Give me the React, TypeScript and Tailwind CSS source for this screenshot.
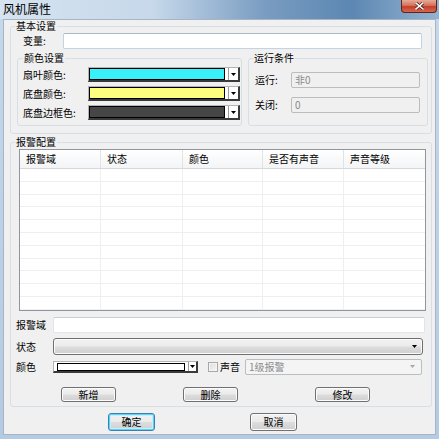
import React from "react";

const Tri = ({ color = "#000" }: { color?: string }) => (
  <svg width="5" height="3" viewBox="0 0 5 3">
    <path d="M0 0H5L2.5 3Z" fill={color} />
  </svg>
);

function ColorCombo({ swatch }: { swatch: string }) {
  return (
    <div className="w-[152px] h-[15px] flex bg-white border-t border-l border-t-[#b4b4b4] border-l-[#b4b4b4] border-b-2 border-r-2 border-b-[#3a3a3a] border-r-[#3a3a3a]">
      <div className={`w-[136px] h-[12px] border border-black ${swatch}`} />
      <div className="ml-[3px] w-px h-[12px] bg-[#9a9a9a]" />
      <div className="flex-1 flex items-center justify-center">
        <Tri />
      </div>
    </div>
  );
}

function Btn({ children, cls }: { children: React.ReactNode; cls: string }) {
  return (
    <div
      className={`${cls} flex items-center justify-center rounded-[3px] border border-[#707070] bg-[linear-gradient(to_bottom,#f2f2f2_0%,#ebebeb_48%,#dddddd_52%,#cfcfcf_100%)] shadow-[inset_0_0_0_1px_#fcfcfc]`}
    >
      {children}
    </div>
  );
}

const rows = Array.from({ length: 11 });

export default function App() {
  return (
    <div className="w-[439px] h-[439px] overflow-hidden font-['Noto_Sans_CJK_SC','Noto_Sans',sans-serif] text-[10px] leading-[12px] text-black bg-[linear-gradient(to_bottom,#c5d8ec,#b3cbe3)] flex flex-col">
      {/* title bar */}
      <div className="h-[19px] flex items-start bg-[linear-gradient(to_right,#d6e3f0_0%,#c6d8ea_35%,#7a9dc2_60%,#5c87b2_80%,#93b3d2_100%)]">
        <span className="ml-[3px] mt-[2px] text-[12px] leading-[13px] text-black">风机属性</span>
        <div className="ml-auto mr-[2px] w-[36px] h-[13px] flex items-center justify-center rounded-b-[4px] border border-t-0 border-[#5e231b] bg-[linear-gradient(to_bottom,#e9a996_0%,#d4735d_45%,#c2402c_55%,#d9664c_100%)]">
          <svg width="9" height="8" viewBox="0 0 9 8">
            <path d="M1 1L8 7M8 1L1 7" stroke="#4a1a14" strokeWidth="3" strokeLinecap="square" />
            <path d="M1 1L8 7M8 1L1 7" stroke="#ffffff" strokeWidth="1.6" strokeLinecap="square" />
          </svg>
        </div>
      </div>

      {/* client area */}
      <div className="ml-[3px] w-[433px] h-[416px] bg-[#f0f0f0] border border-[#a7b4c2] pl-[6px] flex flex-col">
        {/* 基本设置 */}
        <fieldset className="w-[422px] h-[114px] border border-[#d5dfe5] rounded-[3px]">
          <legend className="ml-[4px] px-[1px] leading-[12px]">基本设置</legend>
          <div className="flex flex-col">
            <div className="mt-[1px] h-[16px] flex items-center">
              <span className="ml-[12px] w-[40px]">变量:</span>
              <div className="w-[359px] h-[16px] bg-white border border-[#c3d3e2] border-t-[#abb8c6] rounded-[2px]" />
            </div>
            <div className="mt-[3px] flex">
              <fieldset className="ml-[6px] w-[225px] h-[74px] border border-[#d5dfe5] rounded-[3px]">
                <legend className="ml-[5px] px-[1px] leading-[12px]">颜色设置</legend>
                <div className="pt-[3px] flex flex-col gap-[4px]">
                  <div className="h-[15px] flex items-center">
                    <span className="ml-[5px] w-[65px]">扇叶颜色:</span>
                    <ColorCombo swatch="bg-[#3af0f8]" />
                  </div>
                  <div className="h-[15px] flex items-center">
                    <span className="ml-[5px] w-[65px]">底盘颜色:</span>
                    <ColorCombo swatch="bg-[#fdfd80]" />
                  </div>
                  <div className="h-[15px] flex items-center">
                    <span className="ml-[5px] w-[65px]">底盘边框色:</span>
                    <ColorCombo swatch="bg-[#464646]" />
                  </div>
                </div>
              </fieldset>
              <fieldset className="ml-[6px] w-[180px] h-[74px] border border-[#d5dfe5] rounded-[3px]">
                <legend className="ml-[4px] px-[1px] leading-[12px]">运行条件</legend>
                <div className="pt-[8px] flex flex-col gap-[9px]">
                  <div className="h-[16px] flex items-center">
                    <span className="ml-[6px] w-[36px]">运行:</span>
                    <div className="w-[129px] h-[16px] border border-[#bcbcbc] rounded-[2px] bg-[#f0f0f0] pl-[3px] flex items-center text-[#8a8a8a]">
                      非0
                    </div>
                  </div>
                  <div className="h-[16px] flex items-center">
                    <span className="ml-[6px] w-[36px]">关闭:</span>
                    <div className="w-[129px] h-[16px] border border-[#bcbcbc] rounded-[2px] bg-[#f0f0f0] pl-[3px] flex items-center text-[#8a8a8a]">
                      0
                    </div>
                  </div>
                </div>
              </fieldset>
            </div>
          </div>
        </fieldset>

        {/* 报警配置 */}
        <fieldset className="mt-[2px] w-[422px] h-[271px] border border-[#d5dfe5] rounded-[3px]">
          <legend className="ml-[4px] px-[1px] leading-[12px]">报警配置</legend>
          <div className="flex flex-col">
            <div className="mt-[1px] ml-[8px] w-[407px] h-[162px] border border-[#8f969f] bg-white flex flex-col overflow-hidden">
              <div className="h-[19px] shrink-0 flex border-b border-[#d8d8d8] bg-[linear-gradient(to_bottom,#ffffff,#f3f4f6)] text-black">
                <div className="w-[81px] pl-[6px] flex items-center border-r border-[#e3e3e3]">报警域</div>
                <div className="w-[82px] pl-[6px] flex items-center border-r border-[#e3e3e3]">状态</div>
                <div className="w-[80px] pl-[6px] flex items-center border-r border-[#e3e3e3]">颜色</div>
                <div className="w-[81px] pl-[6px] flex items-center border-r border-[#e3e3e3]">是否有声音</div>
                <div className="flex-1 pl-[6px] flex items-center">声音等级</div>
              </div>
              {rows.map((_, i) => (
                <div key={i} className="h-[12.8px] shrink-0 flex border-b border-[#efefef]">
                  <div className="w-[81px] border-r border-[#efefef]" />
                  <div className="w-[82px] border-r border-[#efefef]" />
                  <div className="w-[80px] border-r border-[#efefef]" />
                  <div className="w-[81px] border-r border-[#efefef]" />
                  <div className="flex-1" />
                </div>
              ))}
            </div>

            <div className="mt-[6px] h-[16px] flex items-center">
              <span className="ml-[5px] w-[37px]">报警域</span>
              <div className="w-[372px] h-[16px] bg-white border border-[#dfe5ea] border-t-[#c5cdd5] rounded-[2px]" />
            </div>

            <div className="mt-[5px] h-[17px] flex items-center">
              <span className="ml-[5px] w-[37px]">状态</span>
              <div className="w-[370px] h-[17px] rounded-[3px] border border-[#707070] bg-[linear-gradient(to_bottom,#f2f2f2_0%,#ebebeb_48%,#dddddd_52%,#cfcfcf_100%)] shadow-[inset_0_0_0_1px_#fbfbfb] flex items-center justify-end pr-[5px]">
                <Tri />
              </div>
            </div>

            <div className="mt-[3px] h-[17px] flex items-center">
              <span className="ml-[5px] w-[37px]">颜色</span>
              <div className="w-[145px] h-[12px] flex bg-white border-t border-l border-t-[#b4b4b4] border-l-[#b4b4b4] border-b-2 border-r-2 border-b-[#3a3a3a] border-r-[#3a3a3a]">
                <div className="ml-[3px] mt-[1px] w-[128px] h-[8px] border border-black bg-white" />
                <div className="ml-[3px] w-px h-[9px] bg-[#9a9a9a]" />
                <div className="flex-1 flex items-center justify-center">
                  <Tri />
                </div>
              </div>
              <div className="ml-[10px] w-[10px] h-[10px] border border-[#a8a8a8] bg-[linear-gradient(135deg,#dcdcdc,#f8f8f8)] shadow-[inset_0_0_0_1px_#f4f4f4]" />
              <span className="ml-[2px] text-black">声音</span>
              <div className="ml-[5px] w-[177px] h-[16px] rounded-[2px] border border-[#b8bec3] bg-[#f4f4f4] flex items-center pl-[3px] pr-[6px] text-[#8b8b8b]">
                <span className="flex-1">1级报警</span>
                <Tri color="#a8a8a8" />
              </div>
            </div>

            <div className="mt-[12px] h-[15px] flex">
              <Btn cls="ml-[50px] w-[55px] h-[15px]">新增</Btn>
              <Btn cls="ml-[67px] w-[55px] h-[15px]">删除</Btn>
              <Btn cls="ml-[77px] w-[55px] h-[15px]">修改</Btn>
            </div>
          </div>
        </fieldset>

        <div className="mt-[6px] h-[18px] flex">
          <div className="ml-[98px] w-[47px] h-[18px] flex items-center justify-center rounded-[3px] border border-[#3c7fb1] bg-[linear-gradient(to_bottom,#f2f2f2_0%,#ebebeb_48%,#dddddd_52%,#cfcfcf_100%)] shadow-[inset_0_0_0_1px_#5fd2f8,inset_0_0_0_2px_#c5eefb]">
            确定
          </div>
          <Btn cls="ml-[95px] w-[47px] h-[18px]">取消</Btn>
        </div>
      </div>
    </div>
  );
}
